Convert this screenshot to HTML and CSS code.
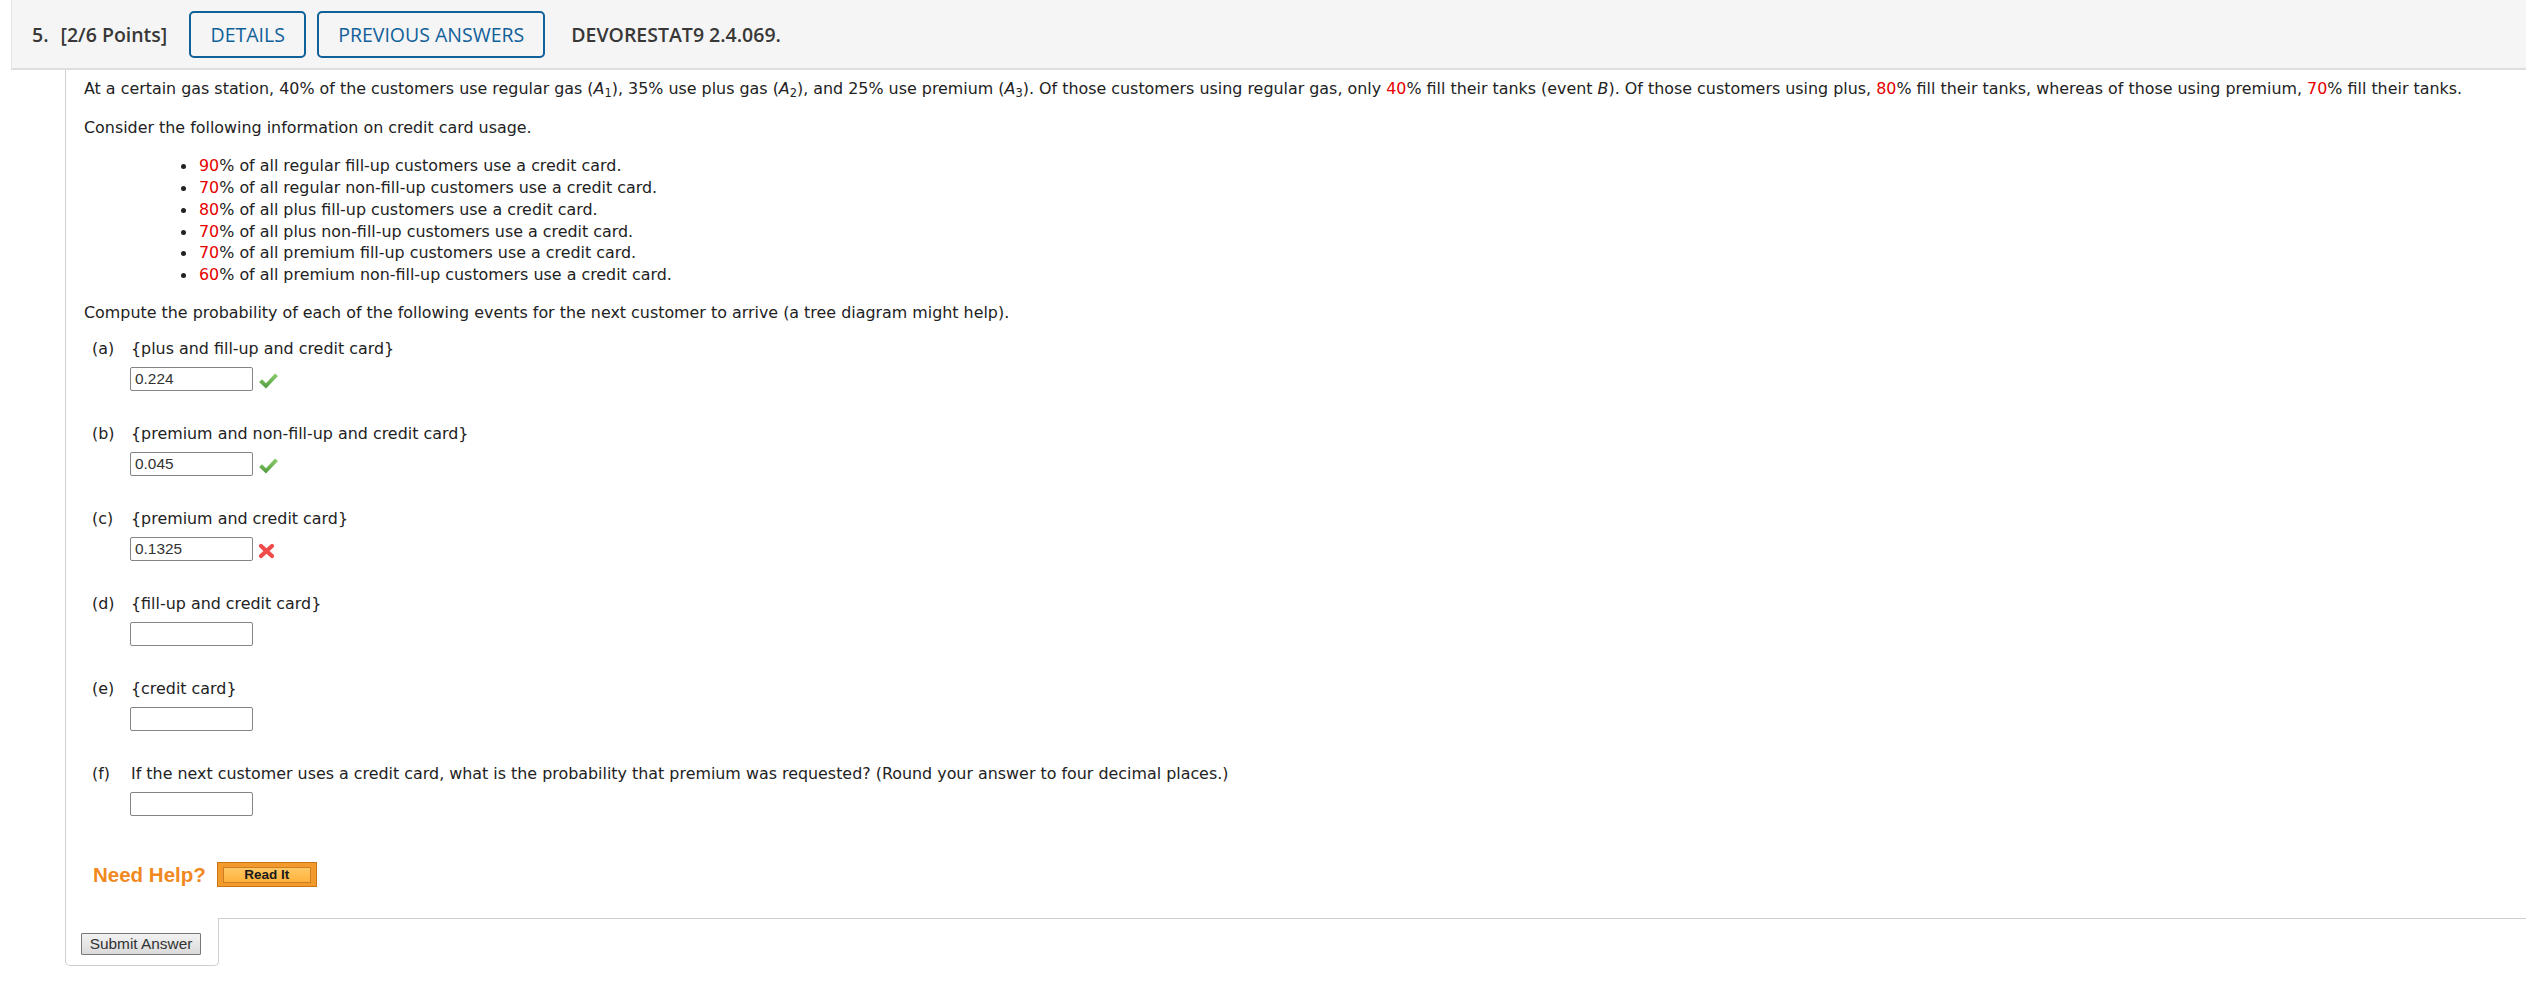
FILE: index.html
```html
<!DOCTYPE html>
<html>
<head>
<meta charset="utf-8">
<link rel="stylesheet" href="styles.css">
</head>
<body>
<div class="page">
  <div class="qhead">
    <span class="qnum">5.</span><span class="qpts">[2/6 Points]</span>
    <button class="hbtn hbtn-details">DETAILS</button>
    <button class="hbtn hbtn-prev">PREVIOUS ANSWERS</button>
    <span class="qcode">DEVORESTAT9 2.4.069.</span>
  </div>
  <div class="qbody">
    <div class="qcontent">
      <p>At a certain gas station, 40% of the customers use regular gas (<i>A</i><sub>1</sub>), 35% use plus gas (<i>A</i><sub>2</sub>), and 25% use premium (<i>A</i><sub>3</sub>). Of those customers using regular gas, only <span class="red">40</span>% fill their tanks (event <i>B</i>). Of those customers using plus, <span class="red">80</span>% fill their tanks, whereas of those using premium, <span class="red">70</span>% fill their tanks.</p>
      <p>Consider the following information on credit card usage.</p>
      <ul class="bullets">
        <li><span class="red">90</span>% of all regular fill-up customers use a credit card.</li>
        <li><span class="red">70</span>% of all regular non-fill-up customers use a credit card.</li>
        <li><span class="red">80</span>% of all plus fill-up customers use a credit card.</li>
        <li><span class="red">70</span>% of all plus non-fill-up customers use a credit card.</li>
        <li><span class="red">70</span>% of all premium fill-up customers use a credit card.</li>
        <li><span class="red">60</span>% of all premium non-fill-up customers use a credit card.</li>
      </ul>
      <p class="compute">Compute the probability of each of the following events for the next customer to arrive (a tree diagram might help).</p>

      <div class="part">
        <div class="plabel"><span class="pl">(a)</span><span>{plus and fill-up and credit card}</span></div>
        <div class="pans"><input class="ans" type="text" value="0.224" readonly>
          <svg class="ico" width="19" height="16" viewBox="0 0 19 16"><defs><linearGradient id="g1" x1="0" y1="0" x2="0" y2="1"><stop offset="0" stop-color="#8fd070"/><stop offset="1" stop-color="#4f9a3c"/></linearGradient></defs><polygon points="0,9 3,6.3 7,10.2 16,0.5 19,3 7,15.5" fill="url(#g1)"/></svg>
        </div>
      </div>

      <div class="part">
        <div class="plabel"><span class="pl">(b)</span><span>{premium and non-fill-up and credit card}</span></div>
        <div class="pans"><input class="ans" type="text" value="0.045" readonly>
          <svg class="ico" width="19" height="16" viewBox="0 0 19 16"><defs><linearGradient id="g2" x1="0" y1="0" x2="0" y2="1"><stop offset="0" stop-color="#8fd070"/><stop offset="1" stop-color="#4f9a3c"/></linearGradient></defs><polygon points="0,9 3,6.3 7,10.2 16,0.5 19,3 7,15.5" fill="url(#g2)"/></svg>
        </div>
      </div>

      <div class="part">
        <div class="plabel"><span class="pl">(c)</span><span>{premium and credit card}</span></div>
        <div class="pans"><input class="ans" type="text" value="0.1325" readonly>
          <svg class="ico icox" width="17" height="16" viewBox="0 0 17 16"><g stroke="#f04a4a" stroke-width="4.2" stroke-linecap="round"><line x1="3" y1="3" x2="14" y2="13"/><line x1="14" y1="3" x2="3" y2="13"/></g></svg>
        </div>
      </div>

      <div class="part">
        <div class="plabel"><span class="pl">(d)</span><span>{fill-up and credit card}</span></div>
        <div class="pans"><input class="ans" type="text" value="" readonly></div>
      </div>

      <div class="part">
        <div class="plabel"><span class="pl">(e)</span><span>{credit card}</span></div>
        <div class="pans"><input class="ans" type="text" value="" readonly></div>
      </div>

      <div class="part">
        <div class="plabel"><span class="pl">(f)</span><span>If the next customer uses a credit card, what is the probability that premium was requested? (Round your answer to four decimal places.)</span></div>
        <div class="pans"><input class="ans" type="text" value="" readonly></div>
      </div>

      <div class="help">
        <span class="needhelp">Need Help?</span>
        <span class="readit"><span class="readit-in">Read It</span></span>
      </div>
    </div>
    <div class="qfoot">
      <div class="submit-cell"><button class="submit">Submit Answer</button></div>
      <div class="foot-rest"></div>
    </div>
  </div>
</div>
</body>
</html>
```

FILE: styles.css
```css
html, body {
  margin: 0;
  padding: 0;
  background: #ffffff;
}

.page {
  padding-left: 11px;
  font-family: "DejaVu Sans", Verdana, sans-serif;
  font-size: 15.9px;
  color: #222222;
}

.qhead {
  box-sizing: border-box;
  height: 70px;
  display: flex;
  align-items: center;
  padding-left: 20px;
  background: #f5f5f5;
  border-left: 1px solid #e6e6e6;
  border-bottom: 2px solid #dedede;
  font-family: "Open Sans", sans-serif;
  font-size: 19.5px;
  color: #383838;
}

.qnum {
  font-weight: 600;
  margin-right: 12px;
}

.qpts {
  font-weight: 600;
  margin-right: 22px;
}

.hbtn {
  box-sizing: border-box;
  height: 47px;
  margin: 0 11px 0 0;
  padding: 0;
  background: transparent;
  border: 2px solid #10609a;
  border-radius: 5px;
  font-family: "Open Sans", sans-serif;
  font-size: 19.5px;
  color: #10609a;
  text-align: center;
}

.hbtn-details {
  width: 117px;
}

.hbtn-prev {
  width: 228px;
}

.qcode {
  margin-left: 15px;
  font-weight: 600;
}

.qbody {
  margin-left: 54px;
}

.qcontent {
  border-left: 1px solid #cfcfcf;
  padding: 8px 0 31px 18px;
  line-height: 21.7px;
}

.qcontent p {
  margin: 0 0 17px 0;
  white-space: nowrap;
}

.qcontent p.compute {
  margin-bottom: 14.5px;
}

sub {
  font-size: 0.72em;
  line-height: 0;
  vertical-align: -0.3em;
}

.red {
  color: #e60000;
}

.bullets {
  list-style: none;
  margin: 0 0 16.5px 0;
  padding: 0 0 0 115px;
}

.bullets li {
  position: relative;
}

.bullets li::before {
  content: "";
  position: absolute;
  left: -18px;
  top: 9px;
  width: 5px;
  height: 5px;
  border-radius: 50%;
  background: #222222;
}

.part {
  margin-bottom: 32.3px;
  padding-left: 8px;
}

.plabel {
  display: flex;
  white-space: nowrap;
}

.pl {
  width: 39px;
  flex: none;
}

.pans {
  display: flex;
  align-items: center;
  margin-top: 7px;
  padding-left: 38px;
  height: 24px;
}

.ans {
  box-sizing: border-box;
  width: 123px;
  height: 24px;
  margin: 0;
  padding: 0 0 0 4px;
  border: 1px solid #858585;
  border-radius: 2px;
  background: #ffffff;
  font-family: "Liberation Sans", Arial, sans-serif;
  font-size: 15.4px;
  color: #333333;
  outline: none;
}

.ico {
  margin-left: 6px;
  margin-top: 3px;
}

.icox {
  margin-left: 5px;
}

.help {
  display: flex;
  align-items: center;
  margin-top: 46px;
  padding-left: 9px;
}

.needhelp {
  font-family: "Liberation Sans", Arial, sans-serif;
  font-weight: bold;
  font-size: 20.5px;
  color: #f0891f;
  margin-right: 11px;
}

.readit {
  box-sizing: border-box;
  width: 100px;
  height: 25px;
  padding: 4px 5px 3px 5px;
  border: 1px solid #c97417;
  background: #f29a2c;
  display: flex;
}

.readit-in {
  flex: 1;
  display: flex;
  align-items: center;
  justify-content: center;
  border: 1px solid #cf7d22;
  background: linear-gradient(#ffc762, #ffb23c);
  font-family: "Liberation Sans", Arial, sans-serif;
  font-weight: bold;
  font-size: 13.5px;
  color: #1a1a1a;
}

.qfoot {
  display: flex;
}

.submit-cell {
  box-sizing: border-box;
  width: 154px;
  padding: 15px 0 10px 15px;
  border-left: 1px solid #cfcfcf;
  border-right: 1px solid #cfcfcf;
  border-bottom: 1px solid #cfcfcf;
  border-radius: 0 0 5px 5px;
}

.submit {
  box-sizing: border-box;
  display: block;
  width: 120px;
  height: 22px;
  margin: 0;
  padding: 0;
  border: 1px solid #777777;
  border-radius: 1px;
  background: linear-gradient(#f2f2f2, #dadada);
  font-family: "Liberation Sans", Arial, sans-serif;
  font-size: 15.4px;
  color: #333333;
  line-height: 20px;
}

.foot-rest {
  flex: 1;
  border-top: 1px solid #cfcfcf;
}
```
